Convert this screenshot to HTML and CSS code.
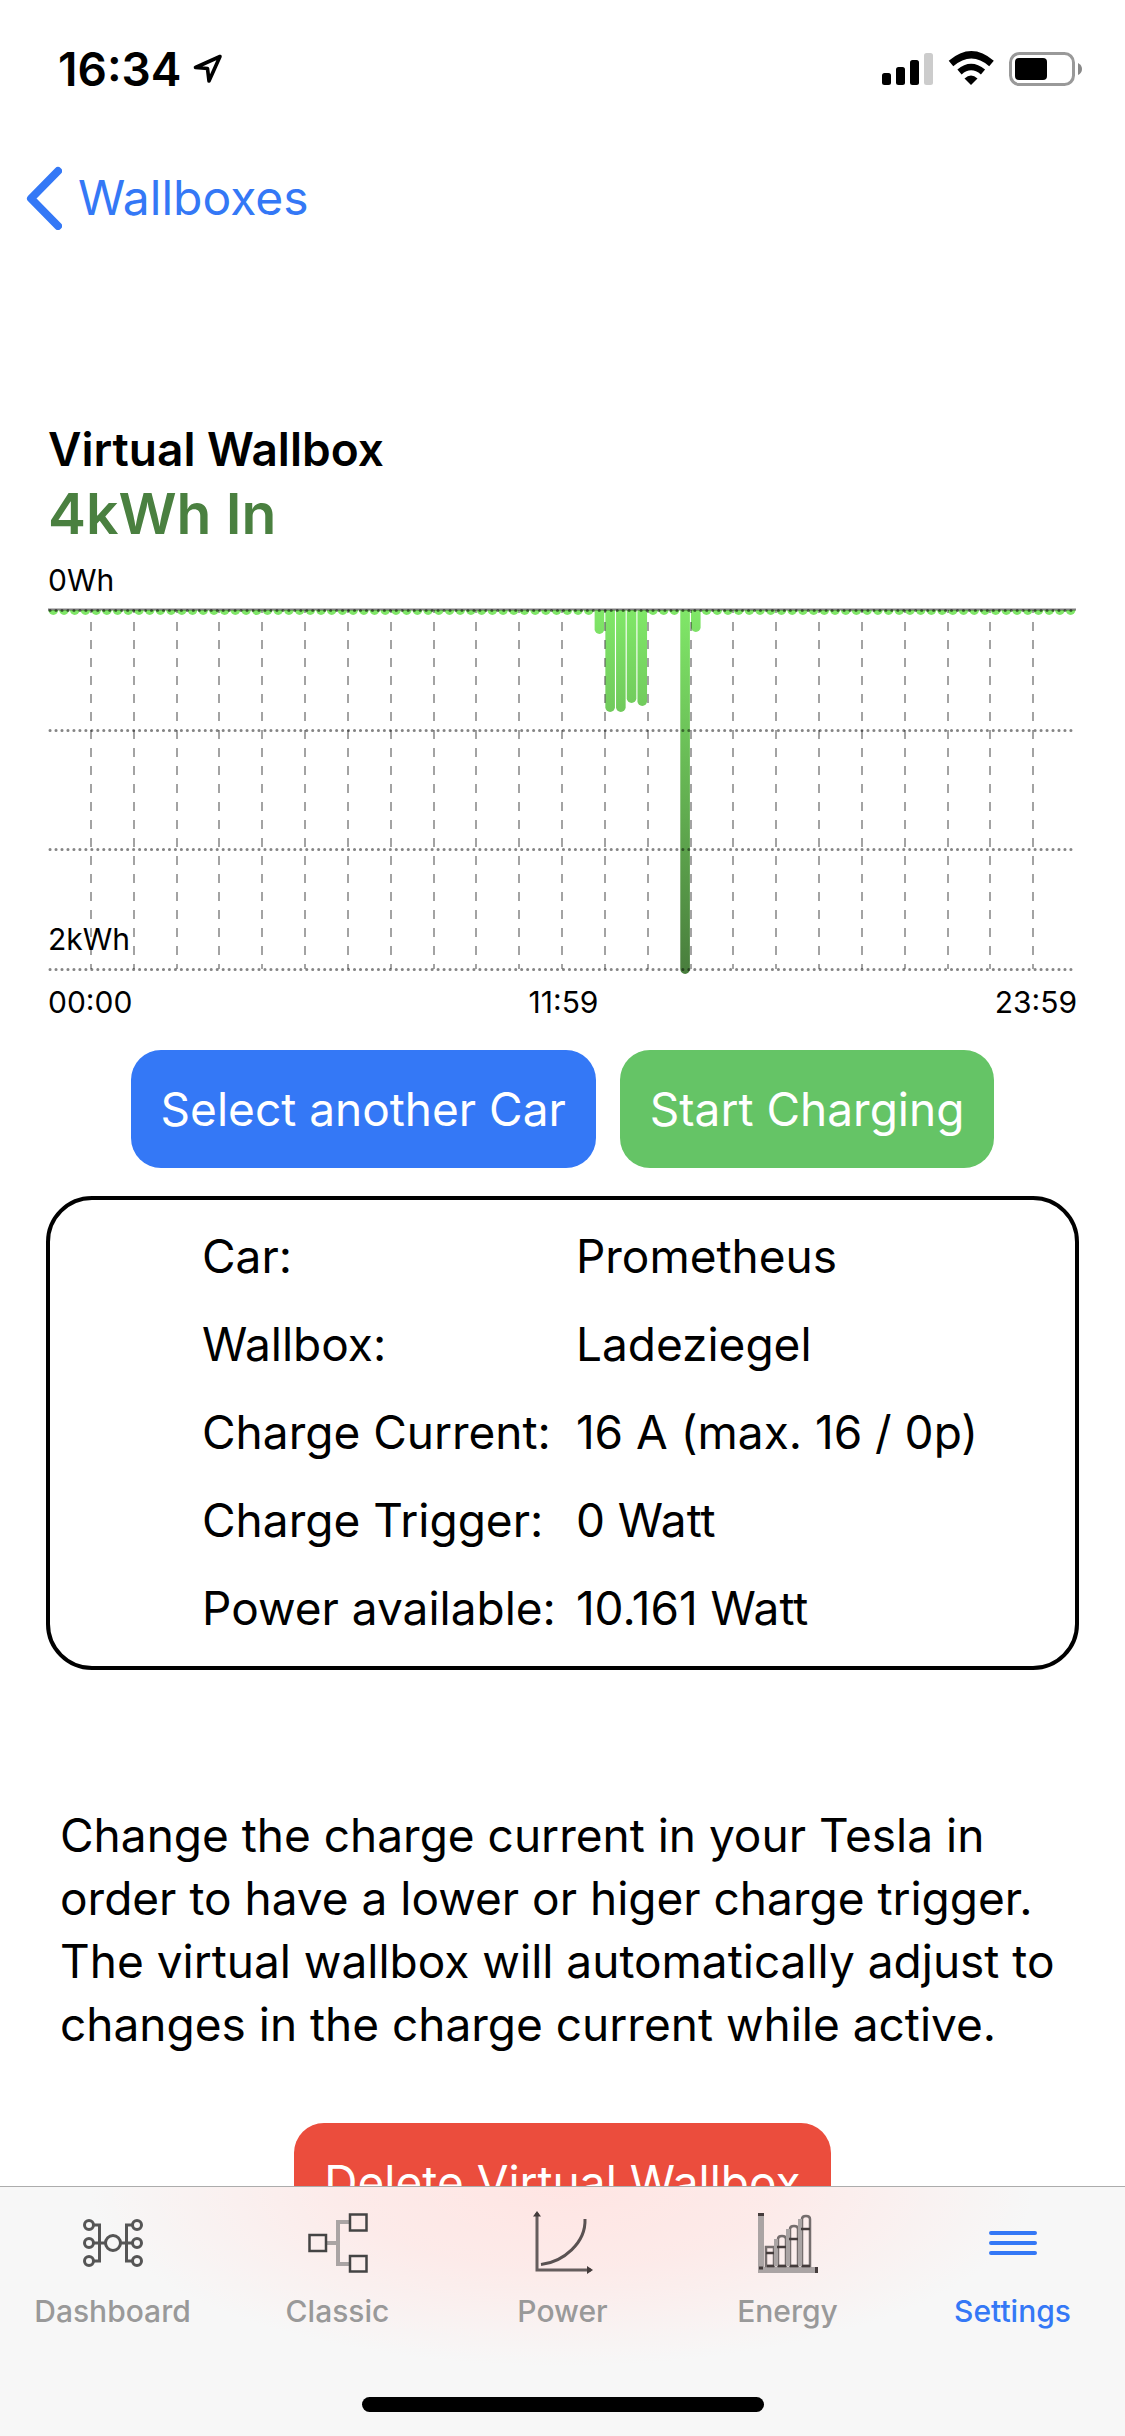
FILE: index.html
```html
<!DOCTYPE html>
<html lang="en">
<head>
<meta charset="utf-8">
<meta name="viewport" content="width=device-width, initial-scale=1">
<title>Virtual Wallbox</title>
<link rel="stylesheet" href="styles.css">
</head>
<body>
<div class="app">
  <header class="status">
    <div class="status-left">
      <span class="clock">16:34</span>
      <svg class="location" width="30" height="30" viewBox="0 0 30 30" aria-hidden="true"><path d="M27 2.500 2.500 13.500 14.500 14.500 16 27Z" fill="none" stroke="#000" stroke-width="3.600" stroke-linejoin="round"/></svg>
    </div>
    <svg class="status-icons" width="202" height="36" viewBox="881 51 202 36" aria-hidden="true">
      <rect x="882" y="73" width="9" height="12" rx="2.500"/>
      <rect x="896" y="67" width="9" height="18" rx="2.500"/>
      <rect x="910" y="60" width="9" height="25" rx="2.500"/>
      <rect x="924" y="53" width="9" height="32" rx="2.500" fill="#ccc"/>
      <path d="M951 63.500Q971.500 46 991.500 63.500" fill="none" stroke="#000" stroke-width="7"/>
      <path d="M959.500 72Q971 62 983 72" fill="none" stroke="#000" stroke-width="6.500"/>
      <path d="M964.500 78.500Q971 72.500 977.500 78.500L971 85Z"/>
      <rect x="1010.500" y="53.500" width="63" height="31" rx="9" fill="none" stroke="#999" stroke-width="3"/>
      <rect x="1015" y="58" width="32" height="22" rx="4"/>
      <path d="M1078 63Q1082 65 1082 69T1078 75Z" fill="#888"/>
    </svg>
  </header>

  <nav class="navbar">
    <a class="back" href="#wallboxes">
      <svg width="36" height="64" viewBox="0 0 36 64" aria-hidden="true"><path d="M32 5 5 32.500 32 60" fill="none" stroke="currentColor" stroke-width="8" stroke-linecap="round" stroke-linejoin="round"/></svg>
      <span>Wallboxes</span>
    </a>
  </nav>

  <main class="content">
    <section class="energy">
      <h1 class="title">Virtual Wallbox</h1>
      <p class="total">4kWh In</p>
      <p class="axis-label">0Wh</p>
      <div class="plot">
        <svg id="chart" class="chart" viewBox="48 608 1029 368" role="img" aria-label="Energy charged through the day">
          <defs>
            <linearGradient id="bar" gradientUnits="userSpaceOnUse" x1="0" y1="610" x2="0" y2="972">
              <stop offset="0" stop-color="#80e768"/><stop offset="1" stop-color="#497e3d"/>
            </linearGradient>
          </defs>
          <g id="bars" fill="url(#bar)"></g>
          <g id="hours" stroke="#000" stroke-opacity=".36" stroke-width="2" stroke-dasharray="9 9" stroke-dashoffset="6"></g>
          <g stroke="#000" stroke-opacity=".48" stroke-width="3" stroke-linecap="round" stroke-dasharray="0.100 5.870">
            <path d="M50 730.500H1076M50 849.500H1076M50 969.500H1076"/>
          </g>
          <path d="M48 609.500H1076" stroke="#000" stroke-opacity=".5" stroke-width="2"/>
          <path d="M50 610.500H1076" stroke="#000" stroke-opacity=".5" stroke-width="3" stroke-linecap="round" stroke-dasharray="0.100 5.870"/>
        </svg>
        <span class="axis-label plot-max">2kWh</span>
      </div>
      <div class="hours">
        <span class="axis-label">00:00</span><span class="axis-label">11:59</span><span class="axis-label">23:59</span>
      </div>
    </section>

    <div class="actions">
      <button class="btn btn-blue" type="button">Select another Car</button>
      <button class="btn btn-green" type="button">Start Charging</button>
    </div>

    <dl class="card">
      <dt>Car:</dt><dd>Prometheus</dd>
      <dt>Wallbox:</dt><dd>Ladeziegel</dd>
      <dt>Charge Current:</dt><dd>16 A (max. 16 / 0p)</dd>
      <dt>Charge Trigger:</dt><dd>0 Watt</dd>
      <dt>Power available:</dt><dd>10.161 Watt</dd>
    </dl>

    <p class="hint">Change the charge current in your Tesla in order to have a lower or higer charge trigger. The virtual wallbox will automatically adjust to changes in the charge current while active.</p>

    <div class="danger">
      <button class="btn btn-red" type="button">Delete Virtual Wallbox</button>
    </div>
  </main>

  <footer class="tabbar">
    <nav class="tabs">
      <a class="tab" href="#dashboard">
        <svg width="60" height="60" viewBox="0 0 60 60" fill="none" stroke="#555" stroke-width="3" aria-hidden="true">
          <circle cx="6" cy="12" r="4.500"/><circle cx="6" cy="30" r="4.500"/><circle cx="6" cy="48" r="4.500"/>
          <circle cx="54" cy="12" r="4.500"/><circle cx="54" cy="30" r="4.500"/><circle cx="54" cy="48" r="4.500"/>
          <circle cx="30" cy="30" r="7.500"/>
          <path d="M11 12H16.500V48H11M11 30H22M49 12H43.500V48H49M49 30H38"/>
        </svg>
        <span>Dashboard</span>
      </a>
      <a class="tab" href="#classic">
        <svg width="60" height="60" viewBox="0 0 60 60" fill="none" stroke="#444" stroke-width="2.500" aria-hidden="true">
          <path d="M19 30H30M42 9H30V51H42" stroke="#aaa4a4" stroke-width="4"/>
          <path d="M1.500 22H18V38H1.500ZM42 1.500H58.500V17.500H42ZM42 43H58.500V58.500H42Z"/>
        </svg>
        <span>Classic</span>
      </a>
      <a class="tab" href="#power">
        <svg width="60" height="64" viewBox="0 -2 60 64" fill="none" stroke="#655d5d" stroke-width="3" aria-hidden="true">
          <path d="M4 0V57H58"/><path d="M0 3.500H8L4-2ZM54 53V61L60 57Z" fill="#443c3c" stroke="none"/>
          <path d="M8 51.500C30 49 53 30 52 6" stroke="#5a5252" stroke-width="3"/>
        </svg>
        <span>Power</span>
      </a>
      <a class="tab" href="#energy">
        <svg width="60" height="60" viewBox="0 0 60 60" fill="none" aria-hidden="true">
          <path d="M3 1V57H59" stroke="#aaa4a4" stroke-width="6"/><path d="M0 1.500H6M58.500 54V60M1 55H5" stroke="#443c3c" stroke-width="3"/>
          <g stroke="#756e6e" stroke-width="2.500">
            <path d="M8 34H16V53H8ZM20 26Q20 23 24 23T28 26V53H20ZM32 16Q32 13 36 13T40 16V53H32ZM44 6Q44 3 48 3T52 6V53H44Z"/>
            <path d="M18 26V53M30 16V53M42 6V53" stroke="#aaa4a4" stroke-width="4"/>
            <path d="M8 40H16M19 34H28M31 26H40M43 16H52M9 53H16M20 53H28M32 53H40M44 53H52" stroke="#443c3c"/>
          </g>
        </svg>
        <span>Energy</span>
      </a>
      <a class="tab tab-active" href="#settings" aria-current="page">
        <svg width="60" height="60" viewBox="0 0 60 60" fill="none" stroke="currentColor" stroke-width="4" stroke-linecap="round" aria-hidden="true"><path d="M8 20H52M8 30H52M8 40H52"/></svg>
        <span>Settings</span>
      </a>
    </nav>
    <div class="home-indicator"></div>
  </footer>
</div>
<script src="chart.js"></script>
</body>
</html>
```
FILE: styles.css
```css
* {
  box-sizing: border-box;
}

body {
  margin: 0;
  background: #fff;
  color: #000;
  font-family: Inter, "Liberation Sans", sans-serif;
  font-size: 46px;
}

h1, p, dl, dd {
  margin: 0;
}

a {
  color: inherit;
  text-decoration: none;
}

svg {
  display: block;
}

.app {
  display: flex;
  flex-direction: column;
  height: 100vh;
  overflow: hidden;
}

.status {
  display: flex;
  flex: none;
  justify-content: space-between;
  align-items: center;
  height: 138px;
  padding: 0 42px 0 58px;
}

.status-left {
  display: flex;
  align-items: center;
  gap: 12px;
}

.clock {
  font-size: 46px;
  font-weight: 600;
}

.navbar {
  flex: none;
  height: 122px;
  padding: 28px 26px 0;
}

.back {
  display: inline-flex;
  align-items: center;
  gap: 16px;
  color: #3478f6;
  font-size: 48px;
  line-height: 64px;
}

.content {
  display: flex;
  flex: 1;
  flex-direction: column;
  min-height: 0;
  padding: 160px 46px 0;
  overflow: hidden;
}

.energy {
  display: flex;
  flex: none;
  flex-direction: column;
  padding: 0 2px;
}

.title {
  font-size: 46px;
  font-weight: 600;
  line-height: 58px;
}

.total {
  color: #4a8040;
  font-size: 57px;
  font-weight: 600;
  line-height: 72px;
}

.axis-label {
  font-size: 30px;
  line-height: 36px;
}

.energy > .axis-label {
  margin: 12px 0 10px;
}

.plot {
  position: relative;
}

.chart {
  width: 100%;
  height: auto;
}

.plot-max {
  position: absolute;
  bottom: 19px;
  left: 0;
}

.hours {
  display: flex;
  justify-content: space-between;
  margin-top: 8px;
}

.actions {
  display: flex;
  flex: none;
  justify-content: center;
  gap: 24px;
  margin-top: 30px;
}

.btn {
  height: 118px;
  padding: 0 30px;
  border: 0;
  border-radius: 30px;
  color: #fff;
  font: inherit;
  white-space: nowrap;
}

.btn-blue {
  background: #3478f6;
}

.btn-green {
  background: #65c466;
}

.btn-red {
  background: #eb4d3d;
}

.card {
  display: grid;
  flex: none;
  grid-template-columns: auto 1fr;
  column-gap: 20px;
  margin-top: 28px;
  padding: 12px 40px 14px 152px;
  border: 4px solid #000;
  border-radius: 46px;
  line-height: 88px;
}

.hint {
  flex: none;
  margin-top: 134px;
  padding: 0 14px;
  line-height: 63px;
}

.danger {
  display: flex;
  flex: none;
  justify-content: center;
  margin-top: 67px;
}

.tabbar {
  display: flex;
  flex: none;
  flex-direction: column;
  align-items: center;
  justify-content: space-between;
  height: 250px;
  padding: 24px 0;
  border-top: 1px solid #acacac;
  background: radial-gradient(ellipse 42% 72% at 50% 0, #ffe5e3, rgba(255, 229, 227, .7) 45%, rgba(255, 229, 227, 0)) #f7f7f7;
}

.tabs {
  display: grid;
  grid-template-columns: repeat(5, 1fr);
  width: 100%;
}

.tab {
  display: grid;
  grid-template-rows: 64px 40px;
  row-gap: 16px;
  place-items: center;
  color: #999;
  font-size: 30px;
  font-weight: 500;
}

.tab-active {
  color: #3478f6;
}

.home-indicator {
  width: 402px;
  height: 15px;
  border-radius: 8px;
  background: #000;
}
```
FILE: chart.js
```js
const NS = "http://www.w3.org/2000/svg";
const LEFT = 48;
const TOP = 610;
const BOTTOM = 969;
const WIDTH = 1028;
const SLOTS = 96;
const step = WIDTH / SLOTS;

// Bar lengths by quarter-hour slot; idle slots get a stub.
const lengths = { 51: 24, 52: 102, 53: 102, 54: 93, 55: 96, 59: 364, 60: 22 };

function add(parent, name, attrs) {
  const node = document.createElementNS(NS, name);
  for (const key in attrs) node.setAttribute(key, attrs[key]);
  document.getElementById(parent).appendChild(node);
}

for (let i = 0; i < SLOTS; i++) {
  const x = LEFT + step * i + 0.5;
  const end = TOP + (lengths[i] || 5);
  const r = 4.8;
  add("bars", "path", {
    d: `M${x} ${TOP}V${end - r}a${r} ${r} 0 0 0 ${2 * r} 0V${TOP}Z`
  });
}

for (let h = 1; h <= 23; h++) {
  const x = Math.round(LEFT + WIDTH / 24 * h);
  add("hours", "path", { d: `M${x} ${TOP}V${BOTTOM}` });
}
```
